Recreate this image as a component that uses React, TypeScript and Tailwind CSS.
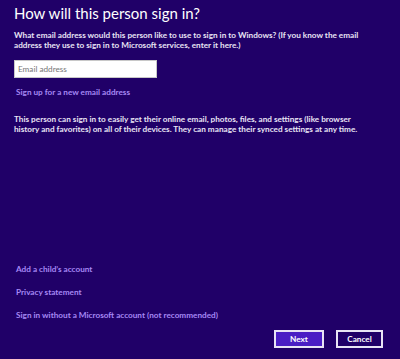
import React from "react";

const App = () => {
  return (
    <div
      className="w-[400px] h-[359px] bg-[#200068] text-white flex flex-col px-[14px] overflow-hidden"
      style={{ fontFamily: 'Lato, "Open Sans", sans-serif' }}
    >
      <h1 className="text-[15px] leading-[20px] mt-[3px] font-normal">How will this person sign in?</h1>
      <p className="text-[8.2px] leading-[10px] mt-[7px] font-bold text-[#e8e4f4] whitespace-nowrap">
        What email address would this person like to use to sign in to Windows? (If you know the email
        <br />
        address they use to sign in to Microsoft services, enter it here.)
      </p>
      <input
        type="text"
        placeholder="Email address"
        className="mt-[10px] w-[143px] h-[18px] bg-white border border-[#c8c8c8] px-[3px] text-[8.2px] text-black placeholder:text-[#767676] outline-none"
      />
      <a className="mt-[9px] ml-[2px] text-[8.2px] leading-[10px] font-bold text-[#a688f4] cursor-pointer">
        Sign up for a new email address
      </a>
      <p className="mt-[17px] text-[8.2px] leading-[10px] font-bold text-[#e8e4f4] whitespace-nowrap">
        This person can sign in to easily get their online email, photos, files, and settings (like browser
        <br />
        history and favorites) on all of their devices. They can manage their synced settings at any time.
      </p>
      <div className="flex-1" />
      <div className="flex flex-col gap-[13px] ml-[2px] text-[8.2px] leading-[10px] font-bold text-[#a688f4]">
        <a className="cursor-pointer">Add a child’s account</a>
        <a className="cursor-pointer">Privacy statement</a>
        <a className="cursor-pointer">Sign in without a Microsoft account (not recommended)</a>
      </div>
      <div className="flex justify-end gap-[12px] mt-[10px] mb-[11px] mr-[3px]">
        <button className="w-[50px] h-[18px] border-2 border-[#e8e4f4] bg-[#4a1ec4] text-[8.2px] font-bold text-white">
          Next
        </button>
        <button className="w-[47px] h-[18px] border-2 border-[#e8e4f4] bg-[#200068] text-[8.2px] font-bold text-white">
          Cancel
        </button>
      </div>
    </div>
  );
};

export default App;
